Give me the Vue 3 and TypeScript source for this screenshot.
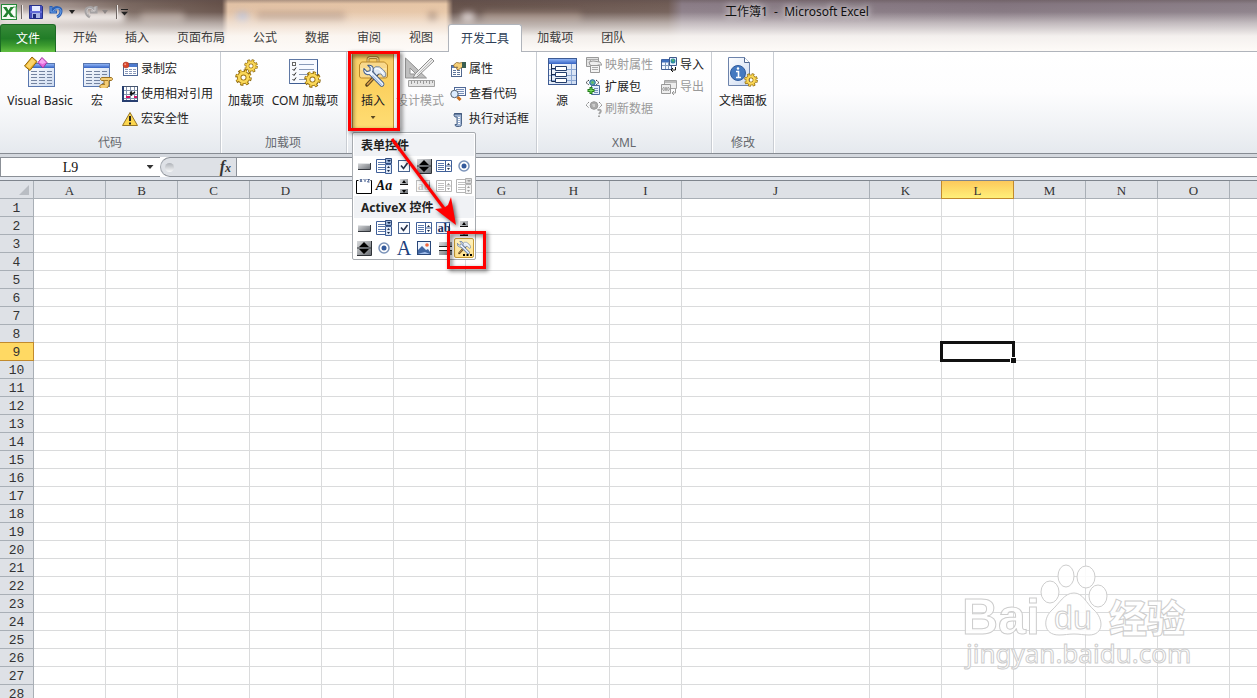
<script setup lang="ts">
import { ref } from 'vue'

interface Item {
  icon: string
  label: string
  off?: boolean
  glyph?: string
}

const tabs: string[] = ['开始', '插入', '页面布局', '公式', '数据', '审阅', '视图', '开发工具', '加载项', '团队']
const activeTab = ref('开发工具')

const codeItems: Item[] = [
  { icon: 'record', label: '录制宏' },
  { icon: 'relative', label: '使用相对引用' },
  { icon: 'warning', label: '宏安全性' },
]
const controlItems: Item[] = [
  { icon: 'props', label: '属性' },
  { icon: 'viewcode', label: '查看代码' },
  { icon: 'rundialog', label: '执行对话框' },
]
const xmlItems: Item[] = [
  { icon: 'mapprops', label: '映射属性', off: true },
  { icon: 'expansion', label: '扩展包' },
  { icon: 'refresh', label: '刷新数据', off: true },
]
const xmlIo: Item[] = [
  { icon: 'import', label: '导入' },
  { icon: 'export', label: '导出', off: true },
]

const formControls: Item[] = [
  { icon: 'c-button', label: '按钮' },
  { icon: 'c-combo', label: '组合框' },
  { icon: 'c-check', label: '复选框' },
  { icon: 'c-spin', label: '数值调节钮' },
  { icon: 'c-list', label: '列表框' },
  { icon: 'c-radio', label: '选项按钮' },
  { icon: 'c-group', label: '分组框' },
  { icon: 'c-label', label: '标签', glyph: 'Aa' },
  { icon: 'c-scroll', label: '滚动条' },
  { icon: 'c-text', label: '文本域', glyph: 'ab', off: true },
  { icon: 'c-list', label: '组合列表', off: true },
  { icon: 'c-combo', label: '组合下拉', off: true },
]
const activeXControls: Item[] = [
  { icon: 'c-button', label: '命令按钮' },
  { icon: 'c-combo', label: '组合框' },
  { icon: 'c-check', label: '复选框' },
  { icon: 'c-list', label: '列表框' },
  { icon: 'c-text', label: '文本框', glyph: 'ab' },
  { icon: 'c-scroll', label: '滚动条' },
  { icon: 'c-spin', label: '数值调节钮' },
  { icon: 'c-radio', label: '选项按钮' },
  { icon: 'c-bigA', label: '标签', glyph: 'A' },
  { icon: 'c-image', label: '图像' },
  { icon: 'c-toggle', label: '切换按钮' },
  { icon: 'c-tools', label: '其他控件' },
]

const columns: string[] = 'ABCDEFGHIJKLMNOP'.split('')
const rowCount = 28
const selected = { col: 'L', row: 9 }
const nameBox = ref('L9')
const formula = ref('')
</script>

<template>
  <div class="app">
    <svg class="defs" aria-hidden="true">
      <defs>
        <linearGradient id="gBlue" x1="0" y1="0" x2="0" y2="1"><stop offset="0" stop-color="#8fb4f5" /><stop offset="1" stop-color="#3563c4" /></linearGradient>
        <linearGradient id="gPage" x1="0" y1="0" x2="1" y2="1"><stop offset="0" stop-color="#fff" /><stop offset="1" stop-color="#ccdaf0" /></linearGradient>
        <linearGradient id="gGray" x1="0" y1="0" x2="1" y2="1"><stop offset="0" stop-color="#d8dadc" /><stop offset="1" stop-color="#6c7076" /></linearGradient>
      </defs>

      <symbol id="gear" viewBox="0 0 16 16">
        <circle cx="8" cy="8" r="6.2" fill="none" stroke="#8e6a10" stroke-width="3.200" stroke-dasharray="2.8 2.07" />
        <circle cx="8" cy="8" r="4.1" fill="none" stroke="#9a7110" stroke-width="4.200" />
        <circle cx="8" cy="8" r="6" fill="none" stroke="#f6cf45" stroke-width="2" stroke-dasharray="1.6 3.112" stroke-dashoffset="-.6" />
        <circle cx="8" cy="8" r="4.1" fill="none" stroke="#fad85a" stroke-width="2.600" />
      </symbol>
      <symbol id="sheetpage" viewBox="0 0 28 24">
        <rect x=".5" y=".5" width="26" height="23" fill="url(#gPage)" stroke="#5876ae" />
        <rect x="1" y="1" width="25" height="4" fill="url(#gBlue)" />
        <path d="M3 8.500h6M3 11.500h6M3 14.500h6M3 17.500h6M3 20.500h6M11 8.500h6M11 11.500h6M11 14.500h6M11 17.500h6M11 20.500h6M19 8.500h5M19 11.500h5M19 14.500h5M19 17.500h5M19 20.500h5" stroke="#7383a0" />
      </symbol>
      <symbol id="vb" viewBox="0 0 32 32">
        <use href="#sheetpage" x="4" y="7" width="28" height="24" />
        <path d="M.5 10L8 1l5 4.500-7 9z" fill="#f0b52c" stroke="#8f6508" />
        <path d="M2 10l6-7.500 3.500 3-6 7z" fill="#fbd469" />
        <path d="M14 6.500l4-5 5 5-4 5.500z" fill="#e568dd" stroke="#a037a0" />
        <path d="M15 6.500l3.500 1.500L22 6.500l-4-4z" fill="#f7a4f2" />
      </symbol>
      <symbol id="macro" viewBox="0 0 32 32">
        <use href="#sheetpage" x="2" y="7" width="28" height="24" />
        <path d="M21 21.500h9c2 0 2 3 0 3h-2v4c0 2-2 4-4 4h-3c-3 0-3-4 0-4h2v-4h-2c-2 0-2-3 0-3z" fill="#f4cd75" stroke="#9a7020" />
        <path d="M23 24.500h4M21 28.500h3" stroke="#a97d28" />
      </symbol>
      <symbol id="record" viewBox="0 0 16 16">
        <rect x="1.500" y="2.500" width="14" height="12" fill="#fff" stroke="#4f6896" />
        <rect x="2" y="3" width="13" height="3" fill="#4d7bd0" />
        <path d="M3 8.500h11M3 10.500h11M3 12.500h11" stroke="#8b9abb" stroke-dasharray="3 1" />
        <circle cx="4" cy="4" r="3" fill="#d9462c" stroke="#a93d27" stroke-width=".5" /><circle cx="3.200" cy="3.200" r="1" fill="#f6a08e" />
      </symbol>
      <symbol id="relative" viewBox="0 0 16 16">
        <rect x=".5" y=".5" width="15" height="15" fill="#fff" stroke="#45546e" />
        <path d="M4.500 1v14M8.500 1v14M12.500 1v14M1 4.500h14M1 8.500h14M1 12.500h14" stroke="#8594af" />
        <rect x="4" y="10" width="4" height="2" fill="#d31565" /><rect x="12" y="10" width="3" height="2" fill="#d31565" />
        <path d="M8 7.500h3l2-1.500M8 7.500l2-2M8 7.500l2 2" fill="none" stroke="#111" stroke-width="1.500" />
        <path d="M0 15h16M1 0v16" stroke="#273e70" stroke-width="2" />
      </symbol>
      <symbol id="warning" viewBox="0 0 16 16">
        <path d="M8 1.500L15.500 14.500H.5z" fill="#fcd64e" stroke="#967525" stroke-linejoin="round" />
        <path d="M8 5v5M8 11.500v2" stroke="#222" stroke-width="2" />
      </symbol>
      <symbol id="addins" viewBox="0 0 32 32">
        <use href="#gear" x="14" y="3" width="14" height="14" />
        <use href="#gear" x="5" y="13" width="17" height="17" />
      </symbol>
      <symbol id="com" viewBox="0 0 32 32">
        <rect x=".5" y="3.500" width="28" height="24" fill="#f8faff" stroke="#6079a5" />
        <path d="M28.500 4v24M1 27.500h28" stroke="#3e5c92" />
        <path d="M10 8.500h15M10 13.500h15M10 18.500h15M10 23.500h8" stroke="#8a9bb9" />
        <rect x="3.500" y="6.500" width="3" height="3" fill="#fff" stroke="#666" />
        <path d="M3.500 13l1.500 1.500 2-3M3.500 18l1.500 1.500 2-3M3.500 23l1.500 1.500 2-3" fill="none" stroke="#222" />
        <use href="#gear" x="15" y="15" width="17" height="17" />
      </symbol>
      <symbol id="hammer" viewBox="0 0 32 32">
        <path d="M21 13L7 28" stroke="#513c1a" stroke-width="4.500" stroke-linecap="round" /><path d="M20 14L7 28" stroke="#d79b45" stroke-width="2" />
        <path d="M14 8q4-5 9-3l5 4 3 4v4l-3 1-3-4-3 0-3 2-3-4z" fill="#dfe8f3" stroke="#5d6f8a" />
        <path d="M17 8q4-2 7 1l4 5" fill="none" stroke="#fff" stroke-width="1.500" />
        <path d="M12 13l14 14" stroke="#3f5c8b" stroke-width="6.500" stroke-linecap="round" />
        <path d="M3 7l4 4 4-1 0-4-3-3q6-1 7 4 0 8-7 8-6-1-5-8z" fill="#eef4fc" stroke="#3f5c8b" stroke-width="1.300" stroke-linejoin="round" />
        <path d="M12 13l14 14" stroke="#eef4fc" stroke-width="4.300" stroke-linecap="round" />
        <path d="M14 16l12 12" stroke="#a9c2e6" stroke-width="1.500" />
      </symbol>
      <symbol id="toolbox" viewBox="0 0 32 32">
        <path d="M11 6V3.500q0-2 2-2h6q2 0 2 2V6" fill="none" stroke="#a98132" stroke-width="3" /><path d="M11 6V3.500q0-2 2-2h6q2 0 2 2V6" fill="none" stroke="#f8dfa0" />
        <path d="M2.500 9l2-3h23l3 3v11q0 2-2 2h-24q-2 0-2-2z" fill="#f9d98c" stroke="#b98728" />
        <path d="M3.500 13h26" stroke="#fff0c0" />
        <use href="#hammer" x="4" y="7" width="26" height="25" />
      </symbol>
      <symbol id="design" viewBox="0 0 32 32">
        <path d="M1.500 2v20h21zM6 12v6h6z" fill="#bfbfbf" fill-rule="evenodd" stroke="#929292" />
        <path d="M11 18L27 2l3 3-17 16-4 1z" fill="#eee" stroke="#8d8d8d" /><path d="M13 19L28 4" stroke="#bbb" />
        <path d="M4.500 24.500h26v6h-26z" fill="#e5e5e5" stroke="#a1a1a1" /><path d="M7.500 25v3M10.500 25v2M13.500 25v3M16.500 25v2M19.500 25v3M22.500 25v2M25.500 25v3M28.500 25v2" stroke="#999" />
      </symbol>
      <symbol id="props" viewBox="0 0 16 16">
        <rect x="1.500" y="4.500" width="10" height="11" fill="#fff" stroke="#50678e" /><rect x="2" y="5" width="9" height="2" fill="#567cc1" />
        <path d="M3 9.500h3M7 9.500h3M3 11.500h3M7 11.500h3M3 13.500h3M7 13.500h3" stroke="#60779b" />
        <path d="M3.500 4l3-2.500 3 .5 3-.5v5l-2 .5-2 2-2-1 1-2-3 .5z" fill="#f5cf78" stroke="#8c6628" stroke-width=".8" /><path d="M12 1h4v6h-4z" fill="#385d51" />
      </symbol>
      <symbol id="viewcode" viewBox="0 0 16 16">
        <rect x="4.500" y="1.500" width="11" height="8" fill="#f5f8ff" stroke="#4f6896" /><path d="M6 3.500h8M6 5.500h8M8 7.500h6" stroke="#7890b8" />
        <circle cx="4.500" cy="8" r="3.700" fill="#dcecff" stroke="#53606f" /><path d="M7.500 11l3 3" stroke="#c66c1d" stroke-width="3" />
      </symbol>
      <symbol id="rundialog" viewBox="0 0 16 16">
        <path d="M4.500 2.500h7v11q0 2-2 2H7q-2 0-2-2h2V6H5Q3 4 4.500 2.500z" fill="#9fb4d3" stroke="#4e6689" /><path d="M8 6.500h2M8 8.500h2M8 10.500h2M8 12.500h2" stroke="#fff" /><path d="M4 3h8" stroke="#354d73" />
      </symbol>
      <symbol id="source" viewBox="0 0 32 32">
        <rect x="2.500" y="2.500" width="28" height="26" fill="url(#gPage)" stroke="#3e5b93" /><rect x="3" y="3" width="27" height="5" fill="url(#gBlue)" />
        <path d="M3 13.500h27M3 19.500h27M3 24.500h27M25.500 8v20" stroke="#8ba7d4" />
        <path d="M5.500 8v17.500H9M5.500 12.500H9M5.500 18.500H9" fill="none" stroke="#182c51" />
        <path d="M9.500 10.500h11v4h-11zM9.500 16.500h11v4h-11zM9.500 22.500h11v4h-11z" fill="#fff" stroke="#253e6b" />
      </symbol>
      <symbol id="mapprops" viewBox="0 0 16 16">
        <path d="M.5.5h12v9H.5z" fill="#e3e3e3" stroke="#999" /><path d="M1 2.500h11M4.500 3v6" stroke="#aaa" /><path d="M3 5l4-1 7 1 2 3-4 0-3 2-5-2z" fill="#eee" stroke="#999" /><path d="M4.500 8.500h9v7h-9z" fill="#f3f3f3" stroke="#999" /><path d="M6 10.500h6M6 12.500h6" stroke="#aaa" />
      </symbol>
      <symbol id="expansion" viewBox="0 0 16 16">
        <path d="M3 1L0 3.500 3 6M10 1l3 2.500L10 6" fill="none" stroke="#282c33" stroke-dasharray="1.500 .5" /><circle cx="6.500" cy="3.500" r="2.800" fill="#58a8b8" stroke="#27688e" /><path d="M5 3l2-1 1 2-2 1z" fill="#65bd57" />
        <path d="M5.500 6.500h8v9h-8z" fill="#e5efff" stroke="#4b6a9b" /><path d="M8 9.500h4M8 11.500h4M8 13.500h4" stroke="#7892bb" /><path d="M5 8v7M1.500 11.500h7" stroke="#237c1c" stroke-width="3" /><path d="M5 9v5M2.500 11.500h5" stroke="#7be25b" />
      </symbol>
      <symbol id="refresh" viewBox="0 0 16 16">
        <path d="M3 1L0 4l3 3M13 1l3 3-3 3" fill="none" stroke="#888" stroke-dasharray="1.500 .5" /><circle cx="8" cy="4.500" r="3.800" fill="#aaa" stroke="#9a9a9a" /><path d="M6 3h3v3H7z" fill="#ccc" /><path d="M11.500 9q4-1 3 2l-1.500 2M13 14.500v1.500" stroke="#a4a4a4" stroke-width="2" fill="none" />
      </symbol>
      <symbol id="import" viewBox="0 0 16 16">
        <path d="M.5 2.500h10v10H.5z" fill="#f3f7ff" stroke="#405c91" /><path d="M1 4h9" stroke="#3f6fbe" stroke-width="3" /><path d="M1 8.500h9M4.500 5v7M7.500 5v7" stroke="#8199bd" />
        <path d="M8.500.5h7v8h-7z" fill="#e7f0ff" stroke="#3e588a" /><circle cx="12" cy="4" r="2.500" fill="#2b8ba1" /><path d="M11 2l2 1-1 2z" fill="#74c44b" /><path d="M14.500 10v3h-4M12 11l-2 2 2 2" fill="none" stroke="#111" />
      </symbol>
      <symbol id="export" viewBox="0 0 16 16">
        <path d="M3.500 1.500h12v8h-12z" fill="#eee" stroke="#a4a4a4" /><path d="M4 3h11" stroke="#bbb" stroke-width="2" /><path d="M.5 5.500h9v9h-9z" fill="#eee" stroke="#999" /><path d="M3 8L1.500 10 3 12M7 8l1.500 2L7 12" fill="none" stroke="#999" /><circle cx="5" cy="10" r="2" fill="#aaa" /><path d="M14.500 10v4h-3M13 12l-2 2 2 2" fill="none" stroke="#999" />
      </symbol>
      <symbol id="docpanel" viewBox="0 0 32 32">
        <path d="M1.500 1.500h16l5 5v23h-21z" fill="url(#gPage)" stroke="#6d83ab" /><path d="M17.500 1.500v5h5" fill="#fff" stroke="#4e6791" />
        <circle cx="11" cy="17" r="7.500" fill="#4479c0" stroke="#2e5b9e" /><path d="M9 15.500h2.500V21M9 21.500h5" fill="none" stroke="#fff" stroke-width="1.600" /><circle cx="11" cy="12.500" r="1.200" fill="#fff" />
        <use href="#gear" x="17" y="17" width="14" height="14" />
      </symbol>

      <symbol id="c-button" viewBox="0 0 16 16"><path d="M2 5h12v7H2z" fill="url(#gGray)" /><path d="M2 11.500h12.500V5" fill="none" stroke="#33373d" /><path d="M2 5.500h12" stroke="#e2e4e6" /></symbol>
      <symbol id="c-combo" viewBox="0 0 16 16">
        <path d="M.5 1.500h10v13H.5z" fill="#fff" stroke="#3f5f98" /><path d="M2 4.500h7M2 6.500h7M2 9.500h7M2 11.500h7" stroke="#5b78aa" /><path d="M9.500.5h6v5h-6z" fill="#9bb4d9" stroke="#2f4b7c" /><path d="M11 2h4l-2 2z" fill="#102548" /><path d="M9.500 6.500h6v9h-6z" fill="#dbe6f6" stroke="#3f5f98" /><path d="M11 10l1.500-2L14 10zM11 12l1.500 2 1.500-2z" fill="#1b2b47" />
      </symbol>
      <symbol id="c-check" viewBox="0 0 16 16"><rect x="2.500" y="2.500" width="11" height="11" fill="#f9fbff" stroke="#47628e" /><path d="M5 7.500l2.500 3L11.500 5" fill="none" stroke="#26324b" stroke-width="1.600" /></symbol>
      <symbol id="c-spin" viewBox="0 0 16 16"><path d="M1 1h14v14H1z" fill="url(#gGray)" /><path d="M1 15.500h14.500V1M1 8h14" fill="none" stroke="#2e3237" /><path d="M3 7l5-5 5 5zM3 9l5 5 5-5z" fill="#000" /></symbol>
      <symbol id="c-list" viewBox="0 0 16 16"><path d="M.5 2.500h15v11H.5z" fill="#fff" stroke="#3f5f98" /><path d="M2 5.500h6M2 7.500h6M2 9.500h6M2 11.500h6" stroke="#5b78aa" /><path d="M9.500 3v10M10 8h5" stroke="#3f5f98" /><path d="M11 7l1.500-2L14 7zM11 10l1.500 2 1.500-2z" fill="#1b2b47" /></symbol>
      <symbol id="c-radio" viewBox="0 0 16 16"><circle cx="8" cy="8" r="5" fill="#fff" stroke="#7b93b9" stroke-width="1.500" /><circle cx="8" cy="8" r="2.500" fill="#345a9c" /></symbol>
      <symbol id="c-group" viewBox="0 0 16 16"><path d="M2.500 2.500h-2v13h15v-13h-1" fill="none" stroke="#000" /><path d="M4 1l2 3M6 1L4 4M7.500 1L9 2.500 10.500 1M9 2.500V4M11.500 1.500h2L11.500 4h2" fill="none" stroke="#173572" stroke-width=".8" /></symbol>
      <symbol id="c-scroll" viewBox="0 0 16 16"><path d="M4 1h8v5H4zM4 11h8v5H4z" fill="url(#gGray)" /><path d="M4 6.500h8M4 15.500h8" stroke="#111" /><path d="M6 5l2-3 2 3zM6 12l2 3 2-3z" fill="#000" /></symbol>
      <symbol id="c-text" viewBox="0 0 16 16"><rect x=".5" y="2.500" width="13" height="11" fill="#f5f8ff" stroke="#5573a9" /><path d="M13.500 4v8" stroke="#172f5b" /></symbol>
      <symbol id="c-image" viewBox="0 0 16 16"><rect x="1.500" y="1.500" width="13" height="13" fill="#eef5ff" stroke="#294779" /><path d="M2 14V10l4-4 4 4 2-1 2 3v2z" fill="#4166a2" /><path d="M2 14h12l-5-2-4 1z" fill="#a6c1ed" /><circle cx="11" cy="5" r="1.800" fill="#f3663b" /></symbol>
      <symbol id="c-toggle" viewBox="0 0 16 16"><path d="M3 2h13v5H3zM3 11h13v4H3z" fill="url(#gGray)" /><path d="M3 6.500h13M3 10.500h13" stroke="#222" /></symbol>
      <symbol id="c-tools" viewBox="0 0 16 16"><use href="#hammer" x="0" y="0" width="15" height="15" /><path d="M7 14h2v2H7zM10.500 14h2v2h-2zM14 14h2v2h-2z" fill="#000" /></symbol>
    </svg>

    <header class="top">
      <div class="ghosts" aria-hidden="true">
        <i class="g1"></i><i class="g2"></i><i class="g3"></i><i class="g4"></i><i class="g5"></i><i class="g6"></i><i class="g7"></i>
      </div>
      <div class="title-row">
        <div class="quick">
          <svg class="xl" viewBox="0 0 16 16"><rect x=".5" y=".5" width="15" height="15" fill="#f4fbf2" stroke="#26883a" /><path d="M12 3h3v10h-3" fill="#fff" stroke="#65ad6e" /><path d="M2 3h3.500l2 3.500L9.500 3H13L9.300 8l4 5H9.700L7.400 9.600 5.300 13H1.800l3.800-5z" fill="#21812f" /></svg>
          <i class="bar"></i>
          <button class="qbtn" aria-label="保存"><svg viewBox="0 0 16 16"><path d="M1.500 1.500h12l1 1v12h-13z" fill="#4750bf" stroke="#25308a" /><path d="M4 2h8v5H4z" fill="#e6ecff" /><path d="M4 9h8v5H4z" fill="#a9b5e6" /><path d="M5 10h3v4H5z" fill="#1f2c7b" /><path d="M2 8h12" stroke="#7d87ed" /></svg></button>
          <button class="qbtn undo" aria-label="撤消"><svg viewBox="0 0 16 16"><path d="M2 2v6h6M3 7c3-5 9-4 9 0 0 3-2 5-4 6" fill="none" stroke="#2b5fb4" stroke-width="3" /><path d="M2 3v5h5M4 7c3-4 8-3 8 0 0 3-2 5-4 6" fill="none" stroke="#6aa2eb" /></svg></button>
          <button class="qarrow" aria-label="撤消列表"></button>
          <button class="qbtn redo" aria-label="恢复" disabled><svg viewBox="0 0 16 16"><path d="M14 2v6H8M13 7C10 2 4 3 4 7c0 3 2 5 4 6" fill="none" stroke="#a5a2a3" stroke-width="3" /><path d="M13 3v4H9M12 7C9 3 5 4 5 7c0 3 1 4 3 5" fill="none" stroke="#cfcaca" /></svg></button>
          <button class="qarrow dim" aria-label="恢复列表" disabled></button>
          <i class="bar"></i>
          <button class="qarrow lined" aria-label="自定义快速访问工具栏"></button>
        </div>
        <h1>工作簿1&nbsp; -&nbsp; Microsoft Excel</h1>
      </div>
      <nav class="tabs">
        <button class="file">文件</button>
        <button v-for="t in tabs" :key="t" class="tab" :class="{ active: t === activeTab }" @click="activeTab = t">{{ t }}</button>
      </nav>
    </header>

    <section class="ribbon">
      <div class="group code">
        <div class="tools">
          <button class="big w80"><svg><use href="#vb" /></svg><span>Visual Basic</span></button>
          <button class="big w34"><svg><use href="#macro" /></svg><span>宏</span></button>
          <div class="stack wide">
            <button v-for="i in codeItems" :key="i.icon" class="small"><svg><use :href="'#' + i.icon" /></svg>{{ i.label }}</button>
          </div>
        </div>
        <div class="caption">代码</div>
      </div>
      <div class="group addin">
        <div class="tools">
          <button class="big w44"><svg><use href="#addins" /></svg><span>加载项</span></button>
          <button class="big w74"><svg><use href="#com" /></svg><span>COM 加载项</span></button>
        </div>
        <div class="caption">加载项</div>
      </div>
      <div class="group controls">
        <div class="tools">
          <div class="insert">
            <button class="big open" aria-expanded="true"><svg><use href="#toolbox" /></svg><span>插入</span><i class="caret"></i></button>
            <div class="menu">
              <h2>表单控件</h2>
              <div class="palette">
                <button v-for="i in formControls" :key="i.label" :class="{ off: i.off }" :aria-label="i.label" :disabled="i.off">
                  <svg v-if="i.icon !== 'c-label'"><use :href="'#' + i.icon" /></svg>
                  <b v-if="i.glyph" :class="i.icon">{{ i.glyph }}</b>
                </button>
              </div>
              <h2>ActiveX 控件</h2>
              <div class="palette">
                <button v-for="i in activeXControls" :key="i.label" :class="{ hot: i.icon === 'c-tools' }" :aria-label="i.label">
                  <svg v-if="i.icon !== 'c-bigA'"><use :href="'#' + i.icon" /></svg>
                  <b v-if="i.glyph" :class="i.icon">{{ i.glyph }}</b>
                </button>
              </div>
            </div>
          </div>
          <button class="big w52 off" disabled><svg><use href="#design" /></svg><span>设计模式</span></button>
          <div class="stack">
            <button v-for="i in controlItems" :key="i.icon" class="small"><svg><use :href="'#' + i.icon" /></svg>{{ i.label }}</button>
          </div>
        </div>
      </div>
      <div class="group xml">
        <div class="tools">
          <button class="big w42"><svg><use href="#source" /></svg><span>源</span></button>
          <div class="stack tight">
            <button v-for="i in xmlItems" :key="i.icon" class="small" :class="{ off: i.off }" :disabled="i.off"><svg><use :href="'#' + i.icon" /></svg>{{ i.label }}</button>
          </div>
          <div class="stack tight second">
            <button v-for="i in xmlIo" :key="i.icon" class="small" :class="{ off: i.off }" :disabled="i.off"><svg><use :href="'#' + i.icon" /></svg>{{ i.label }}</button>
          </div>
        </div>
        <div class="caption">XML</div>
      </div>
      <div class="group modify">
        <div class="tools">
          <button class="big w54"><svg><use href="#docpanel" /></svg><span>文档面板</span></button>
        </div>
        <div class="caption">修改</div>
      </div>
    </section>

    <div class="formula-bar">
      <input v-model="nameBox" class="name" aria-label="名称框" />
      <button class="name-arrow" aria-label="名称列表"></button>
      <div class="fx-zone">
        <i class="knob"></i>
        <button class="fx" aria-label="插入函数"><em>f</em><small>x</small></button>
      </div>
      <input v-model="formula" class="formula" aria-label="编辑栏" />
    </div>

    <main class="sheet">
      <table>
        <colgroup>
          <col class="c-head" />
          <col v-for="c in columns" :key="c" :class="c === 'J' ? 'c-wide' : c === 'P' ? '' : 'c-std'" />
        </colgroup>
        <thead>
          <tr>
            <th class="corner"></th>
            <th v-for="c in columns" :key="c" scope="col" :class="{ on: c === selected.col }">{{ c }}</th>
          </tr>
        </thead>
        <tbody>
          <tr v-for="r in rowCount" :key="r">
            <th scope="row" :class="{ on: r === selected.row }">{{ r }}</th>
            <td v-for="c in columns" :key="c" :class="{ sel: r === selected.row && c === selected.col }"></td>
          </tr>
        </tbody>
      </table>
    </main>

    <svg class="notes" viewBox="0 0 160 240" aria-hidden="true">
      <g fill="none" stroke="#f00" stroke-width="3">
        <rect x="9.500" y="12.500" width="49" height="77" />
        <rect x="108.500" y="192.500" width="36" height="35" />
        <path d="M52 99L106 171" />
      </g>
      <path d="M116 185L95 169l9-1 4-3 3-8z" fill="#f00" />
    </svg>

    <svg class="mark" viewBox="0 0 230 115" aria-hidden="true">
      <g fill="#fff" fill-opacity=".85" stroke="#cdcdcd">
        <text x="-3" y="71" font-family="Liberation Sans, Arial, sans-serif" font-weight="bold" font-size="50">Bai</text>
        <ellipse cx="85" cy="29" rx="9" ry="11" /><ellipse cx="101" cy="13" rx="8" ry="11" /><ellipse cx="121" cy="14" rx="9" ry="11" /><ellipse cx="133" cy="33" rx="9" ry="11" />
        <path d="M109 30c9 0 12 10 20 17 10 9 10 25-5 25-6 0-9-1-15-1s-9 1-15 1c-16 0-16-16-8-24 9-8 13-18 23-18z" />
        <text x="89" y="66" font-family="Liberation Sans, Arial, sans-serif" font-size="34">du</text>
        <text x="144" y="69" font-family="Noto Sans CJK SC, sans-serif" font-weight="900" font-size="38">经验</text>
        <text x="1" y="100" font-family="Noto Sans, sans-serif" font-size="26">jingyan.baidu.com</text>
      </g>
    </svg>
  </div>
</template>

<style>
html, body { margin: 0; overflow: hidden; }
</style>

<style scoped>
.app { position: relative; display: flex; flex-direction: column; height: 100vh; overflow: hidden; background: #fff; font: 12px/18px "Noto Sans", "Noto Sans CJK SC", sans-serif; color: #222; }
.app *, .app *::before, .app *::after { box-sizing: border-box; }
button { padding: 0; border: 0; background: none; font: inherit; color: inherit; white-space: nowrap; }
h1, h2 { margin: 0; }
.defs { position: absolute; width: 0; height: 0; }

.top { position: relative; flex: none; background: linear-gradient(90deg, #b5a9a5 0, #9b8b85 70px, #79675f 130px, #665149 222px, #e1c1a5 228px, #e7c6a6 446px, #65514a 453px, #705c55 668px, #8a7c86 682px, #82747e 1000px, #8b7f88 100%); }
.ghosts { position: absolute; inset: 0; overflow: hidden; }
.ghosts::after { content: ""; position: absolute; inset: 0; background: linear-gradient(180deg, rgba(90, 75, 75, .4) 0, rgba(255, 255, 255, 0) 4px, rgba(255, 255, 255, .05) 12px, rgba(253, 250, 248, .5) 23px, rgba(253, 250, 247, .92) 36px, #fdfaf7 50px); }
.ghosts i { position: absolute; top: 12px; height: 10px; border-radius: 5px; filter: blur(3px); }
.g1 { left: 0; width: 125px; background: #ece5e2; }
.g2 { left: 140px; width: 45px; background: #9d8b82; }
.g3 { left: 236px; width: 13px; background: #b9b9c8; }
.g4 { left: 256px; width: 90px; background: #bfa089; }
.g5 { left: 428px; width: 9px; background: #a98b75; }
.g6 { left: 461px; width: 14px; background: #c5b8b5; }
.g7 { left: 482px; width: 100px; background: #8a7469; }
.title-row { position: relative; display: flex; align-items: center; height: 24px; }
.quick { display: flex; align-items: center; width: 725px; padding-left: 1px; flex: none; }
.xl { width: 16px; height: 16px; }
.bar { width: 1px; height: 14px; margin: 0 4px; background: #6e6663; box-shadow: 1px 0 #eee8e6; }
.qbtn { display: flex; margin-left: 2px; }
.qbtn svg { width: 16px; height: 16px; }
.undo { margin-left: 5px; }
.redo { margin-left: 7px; }
.qarrow { width: 6px; height: 4px; margin-left: 4px; background: #222; clip-path: polygon(0 0, 100% 0, 50% 100%); }
.dim { background: #8c8685; margin: 0 4px; }
.lined { width: 7px; height: 7px; margin-left: 0; clip-path: polygon(0 0, 100% 0, 100% 20%, 0 20%, 0 45%, 100% 45%, 50% 100%, 0 45%); }
h1 { font-size: 12px; font-weight: 400; color: #111; white-space: nowrap; text-shadow: 0 0 6px #fff, 0 0 9px rgba(255, 255, 255, .7); }
.tabs { position: relative; display: flex; height: 28px; border-bottom: 1px solid #b0b4bb; }
.tab { height: 28px; padding: 0 14px; color: #3c3c3c; }
.tab.active { border: 1px solid #b0b4bb; border-bottom: 0; border-radius: 3px 3px 0 0; background: #fff; padding: 0 12px; margin: 0 1px; color: #2f3f58; }
.file { width: 56px; height: 28px; margin-right: 3px; border: 1px solid #1c6b25; border-bottom: 0; border-radius: 3px 3px 0 0; color: #fff; background: linear-gradient(180deg, #378a39, #217d27 50%, #3b9a2e 75%, #62bf42); }

.ribbon { display: flex; flex: none; min-height: 102px; background: linear-gradient(180deg, #fff 0, #fdfdfe 40%, #f0f2f5 75%, #e5e9ee); border-bottom: 1px solid #878c93; }
.group { display: flex; flex-direction: column; border-right: 1px solid #c9cdd3; box-shadow: 1px 0 #fff; }
.code .tools { padding-right: 7px; }
.addin { padding: 0 4px 0 3px; }
.controls { padding: 0 7px 0 5px; }
.xml .tools { padding: 0 7px 0 4px; }
.modify { padding: 0 3px 0 4px; }
.tools { display: flex; flex: 1; }
.caption { height: 19px; text-align: center; color: #66696e; }
.big { display: flex; flex-direction: column; align-items: center; padding-top: 4px; }
.big svg { flex: none; width: 32px; height: 32px; }
.big span { margin-top: 4px; }
.w80 { width: 80px; }
.w74 { width: 74px; }
.w54 { width: 54px; }
.w52 { width: 52px; }
.w44 { width: 44px; }
.w42 { width: 42px; }
.w34 { width: 34px; }
.off { color: #9a9a9a; }
.stack { display: flex; flex-direction: column; padding-top: 4px; margin-left: 4px; }
.wide { margin-left: 8px; }
.small { display: flex; align-items: center; gap: 3px; height: 25px; }
.small svg { width: 16px; height: 16px; }
.tight { padding-top: 2px; margin-left: 3px; }
.tight .small { height: 22px; }
.second { margin-left: 8px; }
.insert { position: relative; }
.open { width: 42px; height: 78px; border: 1px solid #b98f35; border-top: 0; border-radius: 2px; background: linear-gradient(180deg, #e0b04b 0, #f9cf68 8px, #fbd160 45%, #ffdd73 100%); }
.caret { width: 5px; height: 3px; margin-top: 6px; background: #5b4a22; clip-path: polygon(0 0, 100% 0, 50% 100%); }

.menu { position: absolute; z-index: 2; top: 80px; left: 0; width: 124px; border: 1px solid #a7abb0; border-radius: 2px; padding: 1px; background: #fff; }
.menu h2 { height: 22px; padding-left: 7px; background: #f0f2f5; font-size: 12px; line-height: 24px; font-weight: 700; color: #222; }
.palette { display: grid; grid-template-columns: repeat(6, 20px); grid-auto-rows: 20px; }
.palette button { display: grid; place-items: center; }
.palette svg, .palette b { grid-area: 1 / 1; }
.palette svg { width: 16px; height: 16px; }
.palette b { font: 14px/16px "Liberation Serif", serif; color: #172f5b; }
.palette .c-label { font-weight: 700; font-style: italic; color: #111; }
.palette .c-text { font-size: 12px; font-weight: 700; }
.palette .c-bigA { font-size: 20px; line-height: 18px; color: #203f7d; }
.palette .off svg { filter: grayscale(1); opacity: .45; }
.palette .off b { color: #a0a0a0; }
.palette .hot { border: 1px solid #c69b35; border-radius: 2px; background: linear-gradient(#fff3c0, #ffe08a); }

.formula-bar { display: flex; flex: none; height: 26px; border-top: 3px solid #d4d8de; border-bottom: 3px solid #e4e8ef; background: #fff; }
.formula-bar input { min-width: 0; border: 0; padding: 2px 0 0; outline: 0; background: #fff; color: #111; font: 14px/16px "Liberation Serif", "Noto Sans CJK SC", serif; border-top: 1px solid #8b9097; border-bottom: 1px solid #8b9097; }
.formula-bar .name { width: 140px; text-align: center; border-left: 1px solid #8b9097; }
.name-arrow { width: 20px; border-top: 1px solid #8b9097; border-bottom: 1px solid #8b9097; display: grid; place-items: center; }
.name-arrow::before { content: ""; width: 7px; height: 4px; background: #333; clip-path: polygon(0 0, 100% 0, 50% 100%); }
.fx-zone { display: flex; align-items: center; justify-content: space-between; width: 77px; padding: 0 5px 0 4px; border: 1px solid #8b9097; border-left-color: #a2a7ae; border-radius: 10px 0 0 10px; background: #dee1e6; }
.knob { width: 9px; height: 9px; border-radius: 50%; background: linear-gradient(#aeb2b8, #f8f9fa); }
.fx { font: 16px/16px "Liberation Serif", serif; font-weight: 700; color: #333; }
.fx small { font-size: 12px; font-style: italic; }
.formula { flex: 1; }

.sheet { flex: 1; overflow: hidden; border-top: 1px solid #7f858d; }
table { width: 100%; min-width: 1302px; table-layout: fixed; border-collapse: separate; border-spacing: 0; }
.c-head { width: 34px; }
.c-std { width: 72px; }
.c-wide { width: 188px; }
th, td { height: 18px; padding: 0; border-right: 1px solid #dadbdc; border-bottom: 1px solid #dadbdc; }
th { padding-top: 2px; border-color: #a9afb6; background: #dee1e6; color: #333; font: 400 13px/15px "Liberation Serif", serif; text-align: center; }
tbody th { font: 400 13px/15px "Liberation Mono", monospace; }
th.on { border-color: #c18a2d; background: #ffd963; }
thead .on { background: linear-gradient(#fdc95b, #fff07a); box-shadow: -1px 0 #c18a2d; }
tbody .on { box-shadow: 0 -1px #c18a2d; }
.corner { position: relative; }
.corner::after { content: ""; position: absolute; right: 4px; bottom: 3px; width: 10px; height: 10px; background: #b9bdc3; clip-path: polygon(100% 0, 100% 100%, 0 100%); }
.sel { position: relative; }
.sel::before { content: ""; position: absolute; z-index: 1; inset: -2px; border: 3px solid #111; }
.sel::after { content: ""; position: absolute; z-index: 1; right: -3px; bottom: -3px; width: 6px; height: 6px; background: #111; border: solid #fff; border-width: 1px 0 0 1px; }

.notes { position: absolute; z-index: 3; left: 340px; top: 40px; width: 160px; height: 240px; pointer-events: none; filter: drop-shadow(2px 2px 2px rgba(0, 0, 0, .6)); }
.mark { position: absolute; z-index: 3; right: 62px; bottom: 20px; width: 230px; height: 115px; pointer-events: none; overflow: visible; }
</style>
